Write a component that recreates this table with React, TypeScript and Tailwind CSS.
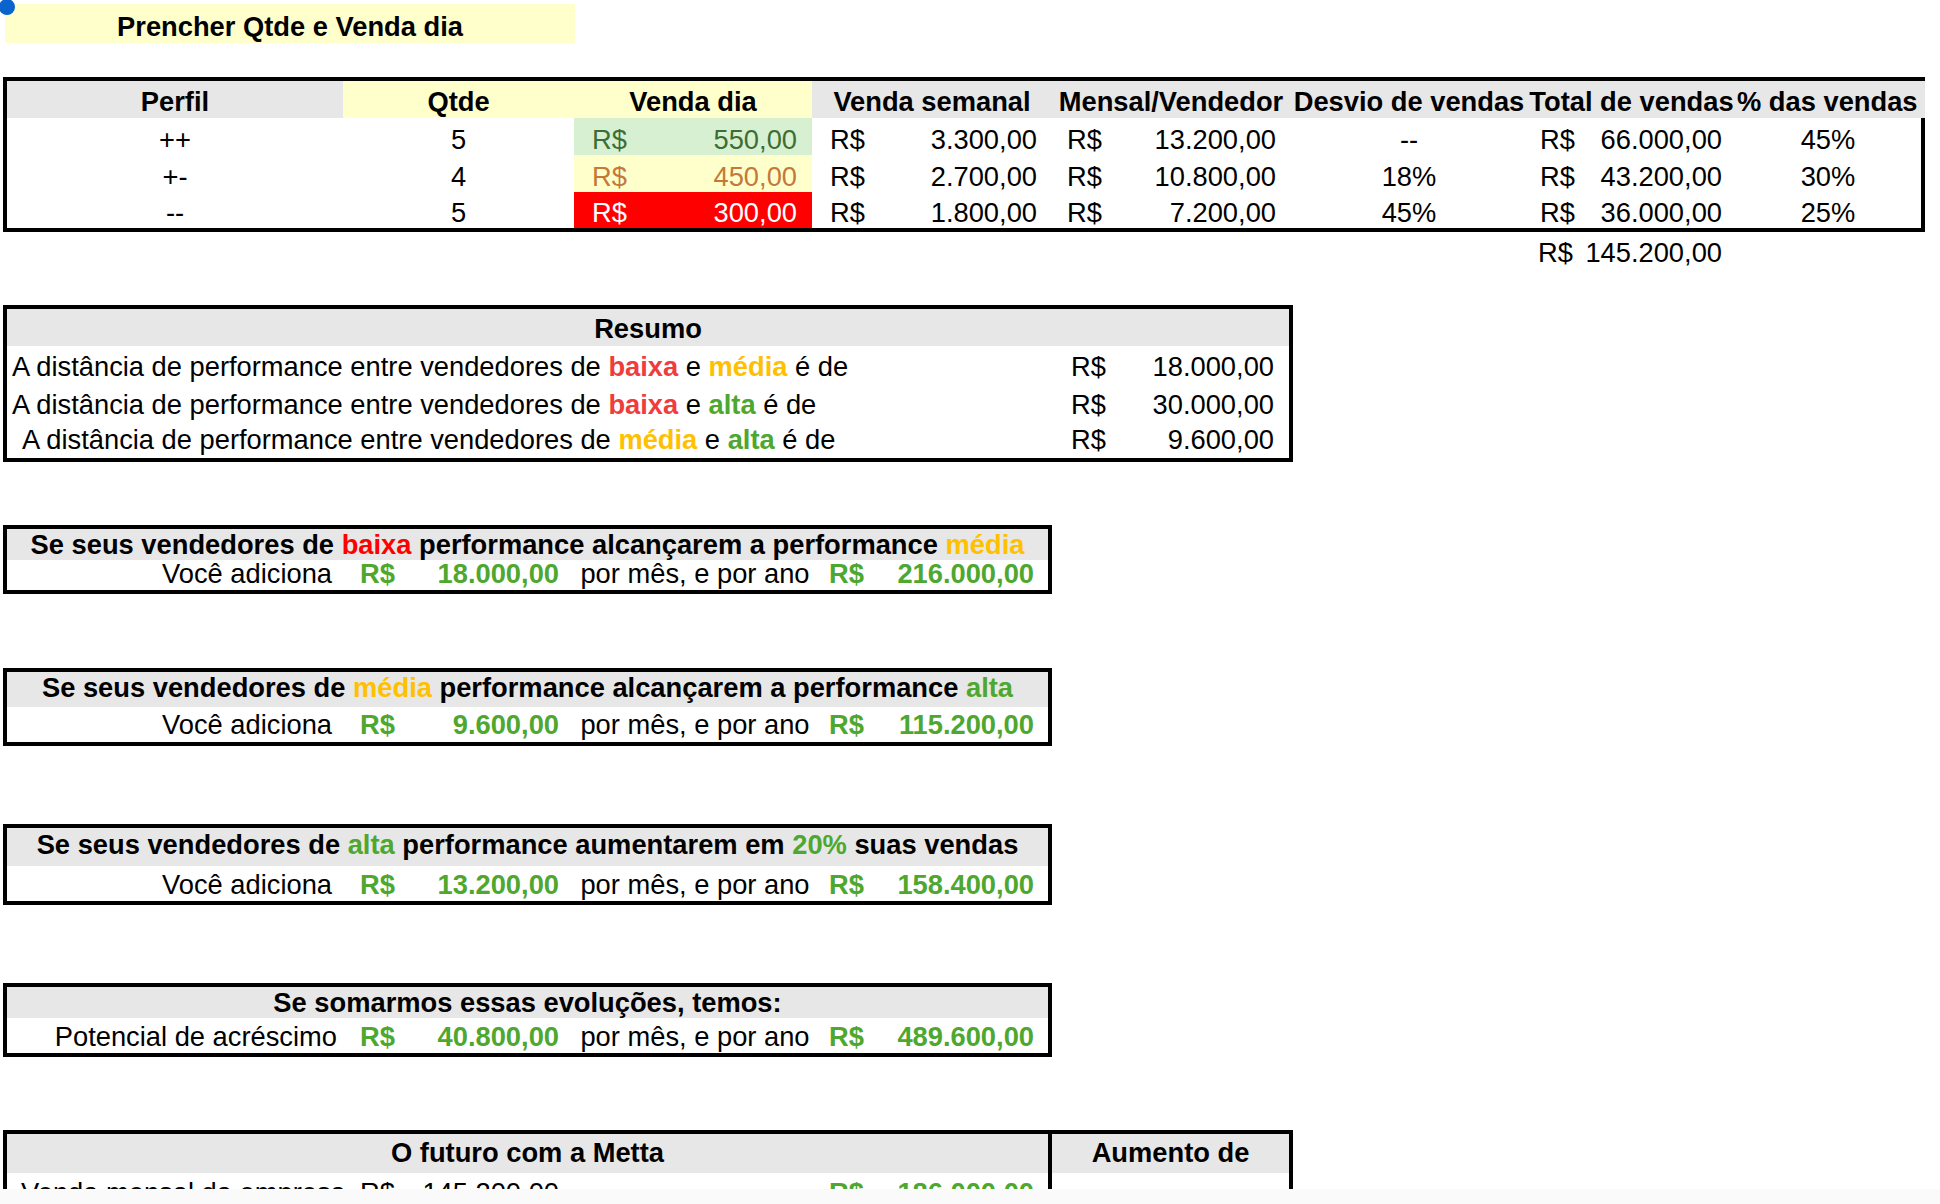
import React from "react"

type Tone = "green" | "yellow" | "red"

interface SalesRow {
    perfil: string
    qtde: string
    dia: string
    tone: Tone
    semanal: string
    mensal: string
    desvio: string
    total: string
    pct: string
    h: string
}

const rows: SalesRow[] = [
    { perfil: "++", qtde: "5", dia: "550,00", tone: "green", semanal: "3.300,00", mensal: "13.200,00", desvio: "--", total: "66.000,00", pct: "45%", h: "h-[37px]" },
    { perfil: "+-", qtde: "4", dia: "450,00", tone: "yellow", semanal: "2.700,00", mensal: "10.800,00", desvio: "18%", total: "43.200,00", pct: "30%", h: "h-[37px]" },
    { perfil: "--", qtde: "5", dia: "300,00", tone: "red", semanal: "1.800,00", mensal: "7.200,00", desvio: "45%", total: "36.000,00", pct: "25%", h: "h-[36px]" },
]

const toneClass: Record<Tone, string> = {
    green: "bg-[#d8f0d2] text-[#3d6e34]",
    yellow: "bg-[#ffffcc] text-[#c4793a]",
    red: "bg-[#ff0000] text-white",
}

const Red = ({ children }: { children: React.ReactNode }) => <span className="font-bold text-[#f03c3c]">{children}</span>
const Orange = ({ children }: { children: React.ReactNode }) => <span className="font-bold text-[#ffc000]">{children}</span>
const Green = ({ children }: { children: React.ReactNode }) => <span className="font-bold text-[#4ea72e]">{children}</span>

interface GainBoxProps {
    header: React.ReactNode
    label: string
    month: string
    year: string
    hHead: string
    hRow: string
    labelPr: string
    mt: string
}

const GainBox: React.FC<GainBoxProps> = ({ header, label, month, year, hHead, hRow, labelPr, mt }) => {
    return (
        <div className={`ml-[3px] w-[1049px] border-4 border-black ${mt}`}>
            <div className={`flex items-end justify-center bg-[#e7e7e7] font-bold whitespace-nowrap ${hHead}`}>
                <span>{header}</span>
            </div>
            <div className={`flex items-end whitespace-nowrap ${hRow}`}>
                <div className={`w-[339px] text-right ${labelPr}`}>{label}</div>
                <div className="flex w-[226px] justify-between pl-[14px] pr-[13px] font-bold text-[#4ea72e]">
                    <span>R$</span>
                    <span>{month}</span>
                </div>
                <div className="w-[246px] text-center">por mês, e por ano</div>
                <div className="flex w-[230px] justify-between pl-[11px] pr-[14px] font-bold text-[#4ea72e]">
                    <span>R$</span>
                    <span>{year}</span>
                </div>
            </div>
        </div>
    )
}

const Money = ({ value, w, pl, pr, pb = "pb-0" }: { value: string; w: string; pl: string; pr: string; pb?: string }) => (
    <div className={`flex h-full items-end justify-between ${w} ${pl} ${pr} ${pb}`}>
        <span>R$</span>
        <span>{value}</span>
    </div>
)

export default function App() {
    return (
        <>
            <div className="relative h-[1189px] w-[1940px] overflow-hidden bg-white font-['Liberation_Sans',Arial,sans-serif] text-[27.3px] leading-[31px] text-black">
                {/* selection handle */}
                <div className="absolute left-[-1px] top-[-1px] h-[16px] w-[16px] rounded-full bg-[#0b63ce]" />

                <div className="ml-[5px] mt-[4px] flex h-[39px] w-[570px] items-center justify-center bg-[#ffffcc] pt-[5px] font-bold">
                    Prencher Qtde e Venda dia
                </div>

                {/* main table */}
                <div className="ml-[3px] mt-[34px] w-[1922px] border-b-4 border-l-4 border-t-4 border-black">
                    <div className="flex h-[37px] font-bold whitespace-nowrap">
                        <div className="flex w-[336px] items-end justify-center bg-[#e7e7e7] pb-[1px]">Perfil</div>
                        <div className="flex w-[231px] items-end justify-center bg-[#ffffcc] pb-[1px]">Qtde</div>
                        <div className="flex w-[238px] items-end justify-center bg-[#ffffcc] pb-[1px]">Venda dia</div>
                        <div className="flex w-[240px] items-end justify-center bg-[#e7e7e7] pb-[1px]">Venda semanal</div>
                        <div className="flex w-[238px] items-end justify-center bg-[#e7e7e7] pb-[1px]">Mensal/Vendedor</div>
                        <div className="flex w-[238px] items-end justify-center bg-[#e7e7e7] pb-[1px]">Desvio de vendas</div>
                        <div className="flex w-[207px] items-end justify-center bg-[#e7e7e7] pb-[1px]">Total de vendas</div>
                        <div className="flex w-[190px] items-end justify-start bg-[#e7e7e7] pb-[1px] pl-[2px]">% das vendas</div>
                    </div>
                    {rows.map((r) => (
                        <div key={r.perfil} className={`flex w-[1918px] border-r-4 border-black whitespace-nowrap ${r.h}`}>
                            <div className="flex w-[336px] items-end justify-center">{r.perfil}</div>
                            <div className="flex w-[231px] items-end justify-center">{r.qtde}</div>
                            <div className={`h-full ${toneClass[r.tone]}`}>
                                <Money value={r.dia} w="w-[238px]" pl="pl-[18px]" pr="pr-[15px]" />
                            </div>
                            <Money value={r.semanal} w="w-[240px]" pl="pl-[18px]" pr="pr-[15px]" />
                            <Money value={r.mensal} w="w-[238px]" pl="pl-[15px]" pr="pr-[14px]" />
                            <div className="flex w-[238px] items-end justify-center">{r.desvio}</div>
                            <Money value={r.total} w="w-[207px]" pl="pl-[12px]" pr="pr-[13px]" />
                            <div className="flex w-[186px] items-end justify-center">{r.pct}</div>
                        </div>
                    ))}
                </div>
                <div className="flex h-[37px] pl-[4px]">
                    <div className="w-[1521px]" />
                    <Money value="145.200,00" w="w-[207px]" pl="pl-[13px]" pr="pr-[10px]" pb="pb-[1px]" />
                </div>

                {/* resumo */}
                <div className="ml-[3px] mt-[36px] w-[1290px] border-4 border-black whitespace-nowrap">
                    <div className="flex h-[37px] items-end justify-center bg-[#e7e7e7] pb-[2px] font-bold">Resumo</div>
                    <div className="flex h-[37px] items-end pb-[1px]">
                        <div className="flex-1 pl-[5px]">
                            A distância de performance entre vendedores de <Red>baixa</Red> e <Orange>média</Orange> é de
                        </div>
                        <div className="flex w-[229px] justify-between pl-[11px] pr-[15px]">
                            <span>R$</span>
                            <span>18.000,00</span>
                        </div>
                    </div>
                    <div className="flex h-[37px] items-end pb-0">
                        <div className="flex-1 pl-[5px]">
                            A distância de performance entre vendedores de <Red>baixa</Red> e <Green>alta</Green> é de
                        </div>
                        <div className="flex w-[229px] justify-between pl-[11px] pr-[15px]">
                            <span>R$</span>
                            <span>30.000,00</span>
                        </div>
                    </div>
                    <div className="flex h-[38px] items-end pb-[3px]">
                        <div className="flex-1 pl-[15px]">
                            A distância de performance entre vendedores de <Orange>média</Orange> e <Green>alta</Green> é de
                        </div>
                        <div className="flex w-[229px] justify-between pl-[11px] pr-[15px]">
                            <span>R$</span>
                            <span>9.600,00</span>
                        </div>
                    </div>
                </div>

                <GainBox
                    mt="mt-[63px]"
                    hHead="h-[31px] pb-0"
                    hRow="h-[30px] pb-[1px]"
                    labelPr="pr-[14px]"
                    header={<>Se seus vendedores de <span className="text-[#ff0000]">baixa</span> performance alcançarem a performance <span className="text-[#ffc000]">média</span></>}
                    label="Você adiciona"
                    month="18.000,00"
                    year="216.000,00"
                />
                <GainBox
                    mt="mt-[74px]"
                    hHead="h-[35px] pb-[4px]"
                    hRow="h-[35px] pb-[2px]"
                    labelPr="pr-[14px]"
                    header={<>Se seus vendedores de <span className="text-[#ffc000]">média</span> performance alcançarem a performance <span className="text-[#4ea72e]">alta</span></>}
                    label="Você adiciona"
                    month="9.600,00"
                    year="115.200,00"
                />
                <GainBox
                    mt="mt-[78px]"
                    hHead="h-[38px] pb-[6px]"
                    hRow="h-[35px] pb-[1px]"
                    labelPr="pr-[14px]"
                    header={<>Se seus vendedores de <span className="text-[#4ea72e]">alta</span> performance aumentarem em <span className="text-[#4ea72e]">20%</span> suas vendas</>}
                    label="Você adiciona"
                    month="13.200,00"
                    year="158.400,00"
                />
                <GainBox
                    mt="mt-[78px]"
                    hHead="h-[31px] pb-0"
                    hRow="h-[35px] pb-[1px]"
                    labelPr="pr-[9px]"
                    header={<>Se somarmos essas evoluções, temos:</>}
                    label="Potencial de acréscimo"
                    month="40.800,00"
                    year="489.600,00"
                />

                {/* futuro */}
                <div className="ml-[3px] mt-[73px] w-[1290px] border-4 border-black whitespace-nowrap">
                    <div className="flex h-[39px] bg-[#e7e7e7] font-bold">
                        <div className="flex w-[1041px] items-end justify-center pb-[5px]">O futuro com a Metta</div>
                        <div className="flex flex-1 items-end justify-center border-l-4 border-black pb-[5px]">Aumento de</div>
                    </div>
                    <div className="flex h-[37px]">
                        <div className="flex w-[1041px] items-end pb-[2px]">
                            <div className="w-[339px] pl-[14px]">Venda mensal da empresa</div>
                            <div className="flex w-[226px] justify-between pl-[14px] pr-[13px]">
                                <span>R$</span>
                                <span>145.200,00</span>
                            </div>
                            <div className="w-[246px]" />
                            <div className="flex w-[230px] justify-between pl-[11px] pr-[14px] font-bold text-[#4ea72e]">
                                <span>R$</span>
                                <span>186.000,00</span>
                            </div>
                        </div>
                        <div className="flex-1 border-l-4 border-black" />
                    </div>
                </div>
            </div>
            <div className="h-[15px] w-[1940px] bg-[#fafafa]" />
        </>
    )
}
